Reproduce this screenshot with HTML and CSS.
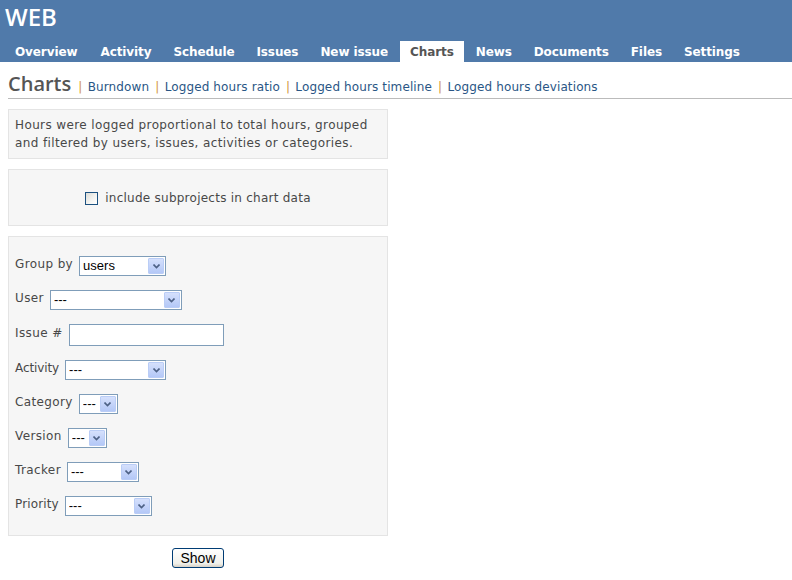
FILE: index.html
```html
<!DOCTYPE html>
<html>
<head>
<meta charset="utf-8">
<title>Charts</title>
<link rel="stylesheet" href="styles.css">
</head>
<body>
<div class="header">
  <h1 class="site-title">WEB</h1>
  <ul class="main-menu">
    <li><a href="#">Overview</a></li>
    <li><a href="#">Activity</a></li>
    <li><a href="#">Schedule</a></li>
    <li><a href="#">Issues</a></li>
    <li><a href="#">New issue</a></li>
    <li><a href="#" class="selected">Charts</a></li>
    <li><a href="#">News</a></li>
    <li><a href="#">Documents</a></li>
    <li><a href="#">Files</a></li>
    <li><a href="#">Settings</a></li>
  </ul>
</div>
<div class="content">
  <div class="title-bar">
    <h2>Charts</h2>
    <span class="sep">|</span><a href="#">Burndown</a>
    <span class="sep">|</span><a href="#">Logged hours ratio</a>
    <span class="sep">|</span><a href="#">Logged hours timeline</a>
    <span class="sep">|</span><a href="#">Logged hours deviations</a>
  </div>

  <div class="box info">Hours were logged proportional to total hours, grouped and filtered by users, issues, activities or categories.</div>

  <div class="box sub">
    <label class="check"><input type="checkbox"><span>include subprojects in chart data</span></label>
  </div>

  <div class="box filters">
    <div class="row"><label>Group by</label><span class="sel w-group"><select><option>users</option></select><span class="arrow"><svg width="7" height="5" viewBox="0 0 7 5"><path d="M0.5 0.5 L3.5 3.5 L6.5 0.5" fill="none" stroke="#4d6185" stroke-width="1.6"/></svg></span></span></div>
    <div class="row"><label>User</label><span class="sel w-user"><select><option>---</option></select><span class="arrow"><svg width="7" height="5" viewBox="0 0 7 5"><path d="M0.5 0.5 L3.5 3.5 L6.5 0.5" fill="none" stroke="#4d6185" stroke-width="1.6"/></svg></span></span></div>
    <div class="row"><label>Issue #</label><input type="text" class="text-input"></div>
    <div class="row"><label class="tight">Activity</label><span class="sel w-activity"><select><option>---</option></select><span class="arrow"><svg width="7" height="5" viewBox="0 0 7 5"><path d="M0.5 0.5 L3.5 3.5 L6.5 0.5" fill="none" stroke="#4d6185" stroke-width="1.6"/></svg></span></span></div>
    <div class="row"><label>Category</label><span class="sel w-small"><select><option>---</option></select><span class="arrow"><svg width="7" height="5" viewBox="0 0 7 5"><path d="M0.5 0.5 L3.5 3.5 L6.5 0.5" fill="none" stroke="#4d6185" stroke-width="1.6"/></svg></span></span></div>
    <div class="row"><label>Version</label><span class="sel w-small"><select><option>---</option></select><span class="arrow"><svg width="7" height="5" viewBox="0 0 7 5"><path d="M0.5 0.5 L3.5 3.5 L6.5 0.5" fill="none" stroke="#4d6185" stroke-width="1.6"/></svg></span></span></div>
    <div class="row"><label>Tracker</label><span class="sel w-tracker"><select><option>---</option></select><span class="arrow"><svg width="7" height="5" viewBox="0 0 7 5"><path d="M0.5 0.5 L3.5 3.5 L6.5 0.5" fill="none" stroke="#4d6185" stroke-width="1.6"/></svg></span></span></div>
    <div class="row"><label class="semi">Priority</label><span class="sel w-priority"><select><option>---</option></select><span class="arrow"><svg width="7" height="5" viewBox="0 0 7 5"><path d="M0.5 0.5 L3.5 3.5 L6.5 0.5" fill="none" stroke="#4d6185" stroke-width="1.6"/></svg></span></span></div>
  </div>

  <div class="actions"><button type="button" class="btn">Show</button></div>
</div>
</body>
</html>
```

FILE: styles.css
```css
html, body {
  margin: 0;
  padding: 0;
  background: #fff;
}
body {
  font-family: "DejaVu Sans", Verdana, sans-serif;
  font-size: 12px;
  letter-spacing: 0.38px;
  color: #484848;
}
a {
  color: #2a5685;
  text-decoration: none;
}

.header {
  background: #507aaa;
  height: 62px;
  display: flex;
  flex-direction: column;
  justify-content: space-between;
}
.site-title {
  margin: 0;
  padding: 2px 0 0 5px;
  font-family: "Open Sans", sans-serif;
  font-weight: 600;
  font-size: 24px;
  line-height: 30px;
  letter-spacing: 0;
  color: #fff;
}
.main-menu {
  list-style: none;
  margin: 0;
  padding: 0 0 0 5px;
  display: flex;
  gap: 2px;
}
.main-menu a {
  display: block;
  padding: 0 10px;
  height: 21px;
  line-height: 23px;
  color: #fff;
  font-weight: bold;
  font-size: 12px;
  letter-spacing: -0.1px;
}
.main-menu li:nth-child(2) a {
  margin-left: 1px;
}
.main-menu a.selected {
  background: #fff;
  color: #555;
}

.content {
  padding: 0 0 0 8px;
}
.title-bar {
  display: flex;
  align-items: baseline;
  border-bottom: 1px solid #bbb;
  padding: 10px 0 2px 0;
  margin-bottom: 10px;
}
.title-bar h2 {
  margin: 0;
  font-family: "Open Sans", sans-serif;
  font-weight: 600;
  font-size: 20px;
  line-height: 24px;
  letter-spacing: 0;
  color: #555;
}
.title-bar a {
  letter-spacing: 0.12px;
}
.title-bar .sep {
  color: #d0953e;
  margin: 0 5px 0 6px;
}
.title-bar h2 + .sep {
  margin-left: 7px;
}

.box {
  width: 366px;
  background: #f6f6f6;
  border: 1px solid #e4e4e4;
  margin-bottom: 10px;
  line-height: 18px;
}
.info {
  padding: 6px 6px;
}
.sub {
  padding: 19px 6px 18px;
  display: flex;
  justify-content: center;
}
.check {
  display: flex;
  align-items: center;
  gap: 7px;
  height: 18px;
  letter-spacing: 0.25px;
}
.check input {
  appearance: none;
  -webkit-appearance: none;
  margin: 1px 0 0 0;
  width: 13px;
  height: 13px;
  border: 1px solid #1c5180;
  background: linear-gradient(135deg, #dcdcd7 0%, #f5f5f2 60%, #ffffff 100%);
  box-sizing: border-box;
}

.filters {
  padding: 19px 6px;
  display: flex;
  flex-direction: column;
  gap: 14px;
}
.row {
  display: flex;
  align-items: center;
  gap: 6px;
}
.row label {
  position: relative;
  top: -2px;
}
.row label.tight {
  letter-spacing: -0.1px;
}
.row label.semi {
  letter-spacing: 0.13px;
}

.sel {
  display: inline-flex;
  height: 20px;
  box-sizing: border-box;
  border: 1px solid #7f9db9;
  background: #fff;
  padding: 0 1px 0 0;
  align-items: center;
}
.sel select {
  appearance: none;
  -webkit-appearance: none;
  border: 0;
  outline: 0;
  background: transparent;
  flex: 1;
  min-width: 0;
  padding: 0 0 0 3px;
  margin: 0;
  font-family: "Liberation Sans", Arial, sans-serif;
  font-size: 13px;
  letter-spacing: 0;
  color: #000;
  height: 18px;
  line-height: 18px;
}
.sel .arrow {
  width: 16px;
  height: 16px;
  box-sizing: border-box;
  border: 1px solid #bacdf6;
  border-radius: 1px;
  background: linear-gradient(#d5e0fc, #b4c8f7);
  display: flex;
  align-items: center;
  justify-content: center;
}
.w-group { width: 87px; }
.w-user { width: 132px; }
.w-activity { width: 101px; }
.w-small { width: 39px; }
.w-tracker { width: 72px; }
.w-priority { width: 87px; }

.text-input {
  width: 155px;
  height: 22px;
  box-sizing: border-box;
  border: 1px solid #7f9db9;
  margin: 0;
  padding: 0 2px;
  font-family: "Liberation Sans", Arial, sans-serif;
  font-size: 13px;
}

.actions {
  width: 380px;
  display: flex;
  justify-content: center;
  margin-top: 12px;
}
.btn {
  width: 52px;
  height: 20px;
  padding: 0;
  border: 1px solid #003c74;
  border-radius: 3px;
  background: linear-gradient(#ffffff, #f0f0ea 80%, #d6d0c5);
  font-family: "Liberation Sans", Arial, sans-serif;
  font-size: 14px;
  letter-spacing: 0;
  color: #000;
}
```
